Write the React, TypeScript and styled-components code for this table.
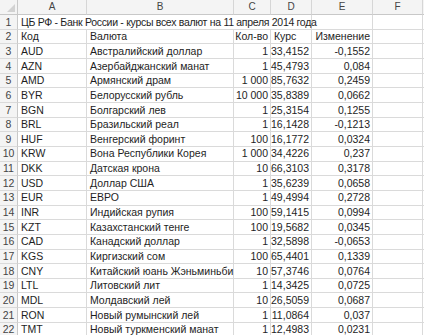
import React from "react";
import styled, { createGlobalStyle } from "styled-components";

const Global = createGlobalStyle`
  html, body { margin: 0; padding: 0; background: #ffffff; overflow: hidden; }
  body { width: 424px; height: 335px; }
`;

const Sheet = styled.div`
  display: grid;
  grid-template-columns: 18px 69px 147px 37px 41px 61px 50px 1fr;
  grid-template-rows: 15px repeat(22, 14.67px);
  width: 424px;
  font-family: "Liberation Sans", Arial, sans-serif;
  font-size: 10.5px;
  color: #1e1e1e;
`;

const Corner = styled.div`
  background: #f4f4f4;
  border-right: 1px solid #c8c8c8;
  border-bottom: 1px solid #c8c8c8;
  display: flex;
  align-items: flex-end;
  justify-content: flex-end;
  padding: 0 2px 2px 0;
`;

const ColHeader = styled.div`
  background: #f4f4f4;
  border-right: 1px solid #d6d6d6;
  border-bottom: 1px solid #c8c8c8;
  color: #444444;
  font-size: 10px;
  display: flex;
  align-items: center;
  justify-content: center;
  line-height: 1;
`;

const RowHeader = styled.div`
  background: #f4f4f4;
  border-right: 1px solid #c8c8c8;
  border-bottom: 1px solid #dadada;
  color: #444444;
  display: flex;
  align-items: center;
  justify-content: center;
  line-height: 1;
  overflow: hidden;
`;

const Cell = styled.div<{ $align?: "left" | "right"; $span?: number }>`
  grid-column: span ${(p) => p.$span ?? 1};
  border-right: 1px solid #dadada;
  border-bottom: 1px solid #dadada;
  display: flex;
  align-items: center;
  justify-content: ${(p) => (p.$align === "right" ? "flex-end" : "flex-start")};
  padding: 0 2px 0 3px;
  white-space: nowrap;
  overflow: hidden;
  line-height: 1;
`;

const NameCell = styled(Cell)`
  overflow: visible;
`;

const TitleCell = styled(Cell)`
  overflow: visible;
  letter-spacing: -0.3px;
`;

const cols = ["A", "B", "C", "D", "E", "F", ""];

const data: [string, string, string, string, string][] = [
  ["AUD", "Австралийский доллар", "1", "33,4152", "-0,1552"],
  ["AZN", "Азербайджанский манат", "1", "45,4793", "0,084"],
  ["AMD", "Армянский драм", "1 000", "85,7632", "0,2459"],
  ["BYR", "Белорусский рубль", "10 000", "35,8389", "0,0662"],
  ["BGN", "Болгарский лев", "1", "25,3154", "0,1255"],
  ["BRL", "Бразильский реал", "1", "16,1428", "-0,1213"],
  ["HUF", "Венгерский форинт", "100", "16,1772", "0,0324"],
  ["KRW", "Вона Республики Корея", "1 000", "34,4226", "0,237"],
  ["DKK", "Датская крона", "10", "66,3103", "0,3178"],
  ["USD", "Доллар США", "1", "35,6239", "0,0658"],
  ["EUR", "ЕВРО", "1", "49,4994", "0,2728"],
  ["INR", "Индийская рупия", "100", "59,1415", "0,0994"],
  ["KZT", "Казахстанский тенге", "100", "19,5682", "0,0345"],
  ["CAD", "Канадский доллар", "1", "32,5898", "-0,0653"],
  ["KGS", "Киргизский сом", "100", "65,4401", "0,1339"],
  ["CNY", "Китайский юань Жэньминьби", "10", "57,3746", "0,0764"],
  ["LTL", "Литовский лит", "1", "14,3425", "0,0725"],
  ["MDL", "Молдавский лей", "10", "26,5059", "0,0687"],
  ["RON", "Новый румынский лей", "1", "11,0864", "0,037"],
  ["TMT", "Новый туркменский манат", "1", "12,4983", "0,0231"],
];

export default function App() {
  return (
    <>
      <Global />
      <Sheet>
        <Corner>
          <svg width="8" height="8" viewBox="0 0 8 8">
            <polygon points="8,0 8,8 0,8" fill="#d2d2d2" />
          </svg>
        </Corner>
        {cols.map((c, i) => (
          <ColHeader key={i}>{c}</ColHeader>
        ))}

        <RowHeader>1</RowHeader>
        <TitleCell $span={4}>ЦБ РФ - Банк России - курсы всех валют на 11 апреля 2014 года</TitleCell>
        <Cell />
        <Cell />
        <Cell />

        <RowHeader>2</RowHeader>
        <Cell>Код</Cell>
        <NameCell>Валюта</NameCell>
        <Cell $align="right">Кол-во</Cell>
        <Cell>Курс</Cell>
        <Cell $align="right">Изменение</Cell>
        <Cell />
        <Cell />

        {data.map((r, i) => (
          <React.Fragment key={r[0]}>
            <RowHeader>{i + 3}</RowHeader>
            <Cell>{r[0]}</Cell>
            <NameCell>{r[1]}</NameCell>
            <Cell $align="right">{r[2]}</Cell>
            <Cell $align="right">{r[3]}</Cell>
            <Cell $align="right">{r[4]}</Cell>
            <Cell />
            <Cell />
          </React.Fragment>
        ))}
      </Sheet>
    </>
  );
}
